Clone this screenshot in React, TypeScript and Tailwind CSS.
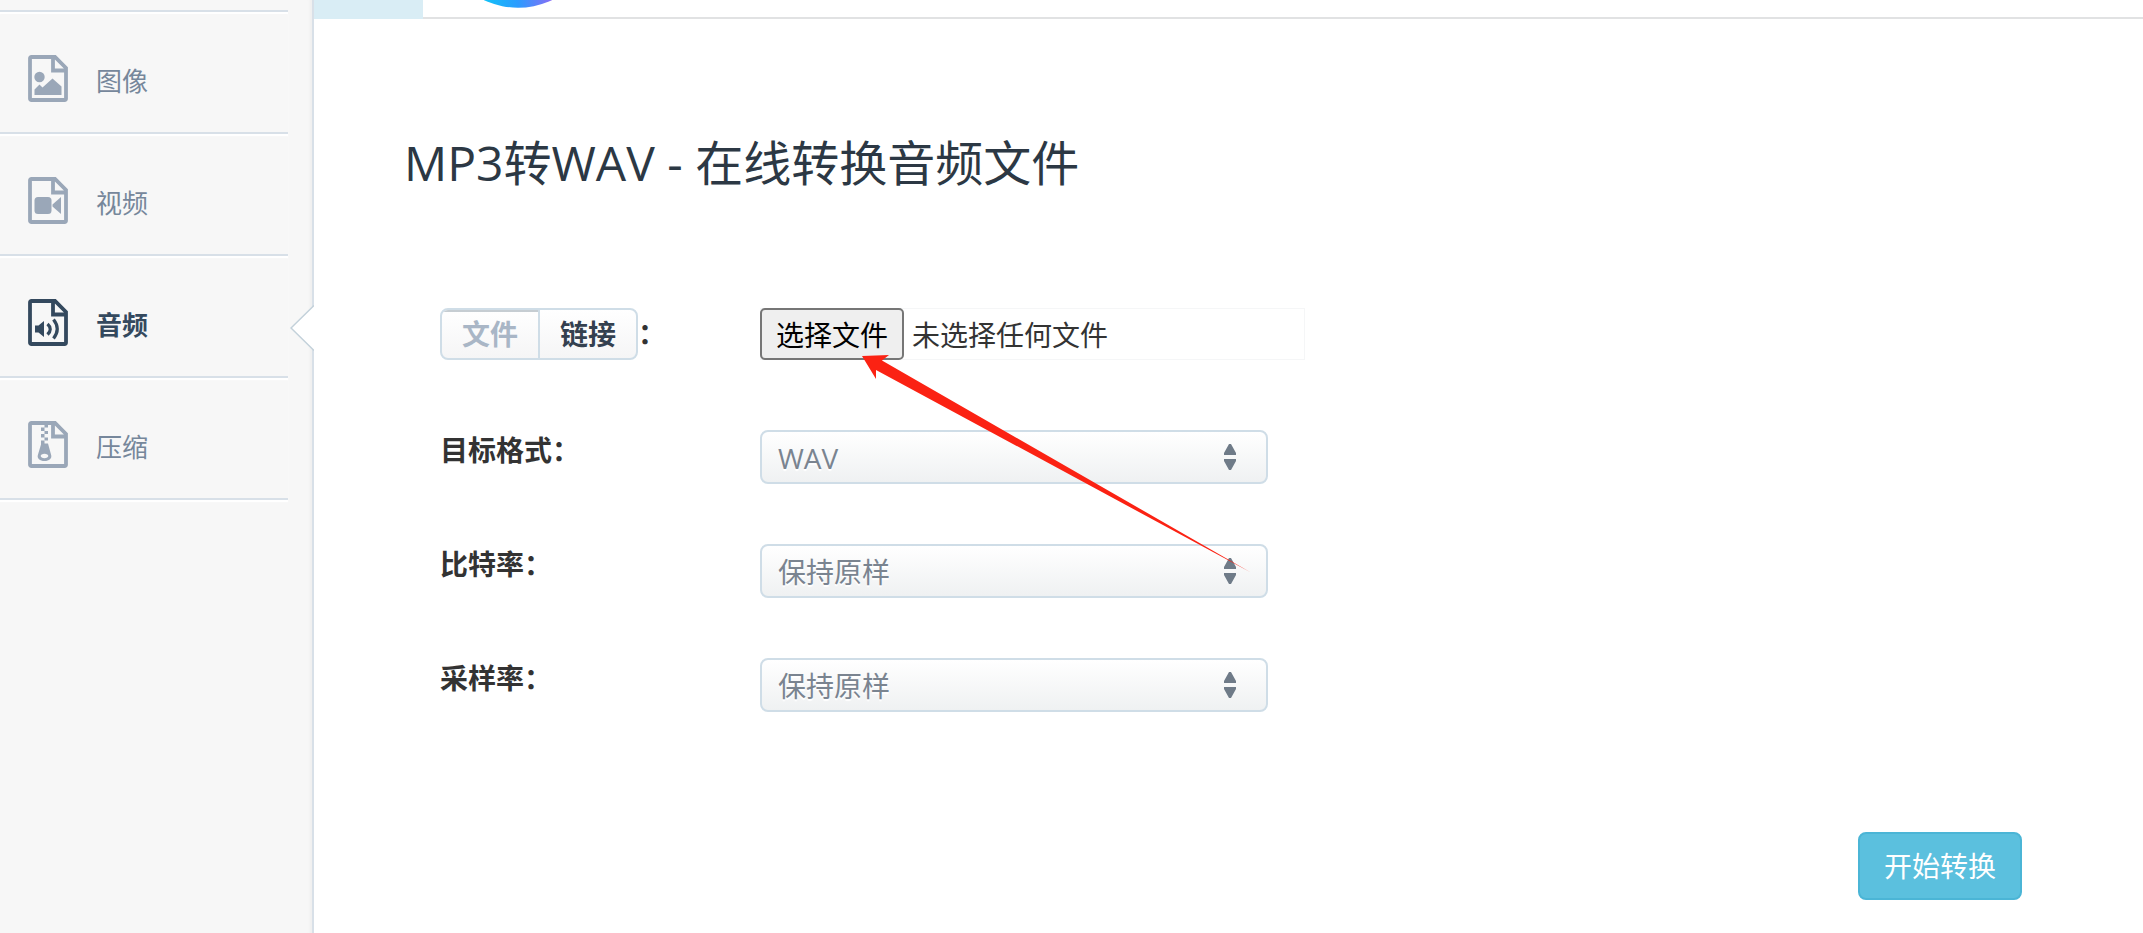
import type React from "react"
import { useId, useRef } from "react"

type NavItem = {
  label: string
  icon: React.ReactNode
  active?: boolean
}

const navItems: NavItem[] = [
  {
    label: "图像",
    icon: (
      <>
        <circle cx="11.5" cy="22" r="5.200" />
        <path d="M6.500 40V34.500l5-5 3 3L24.500 23.500l9 8V40z" />
      </>
    ),
  },
  {
    label: "视频",
    icon: (
      <>
        <rect x="6.500" y="20" width="17" height="17" rx="3.500" />
        <path d="M33 20v17l-8.500-7.500v-2z" />
      </>
    ),
  },
  {
    label: "音频",
    active: true,
    icon: (
      <>
        <path d="M7 26.500h3.500l5.500-4.500v16l-5.500-4.500H7z" />
        <path
          d="M19.500 25q5.500 5 0 10.500M25.500 20.500q7.500 9.500 0 19"
          fill="none"
          stroke="currentColor"
          strokeWidth="3.200"
        />
      </>
    ),
  },
  {
    label: "压缩",
    icon: (
      <>
        <path d="M16.500 3.500h3.500v3h-3.500zM13 6.500h3.500v3.500h-3.500zM16.500 10h3.500v3h-3.500zM13 13h3.500v3.500h-3.500zM16.500 16.500h3.500v3h-3.500z" />
        <path
          fillRule="evenodd"
          d="M13 19.500h3.500v3h3.500l3 11c1.500 4-2 6.500-6.500 6.500s-8-2.500-6.500-6.500l3-10zM16.500 32.800c-2.200 0-3.800 1-3.800 2.200s1.600 2.200 3.800 2.200 3.800-1 3.800-2.200-1.600-2.200-3.800-2.200z"
        />
      </>
    ),
  },
]

const FileIcon: React.FC<{ children: React.ReactNode }> = ({ children }) => (
  <svg viewBox="0 0 40 47" className="w-10 h-[47px] shrink-0" fill="currentColor" aria-hidden="true">
    <path
      d="M3.500 2H27l11 11v30.500q0 1.500-1.500 1.500h-33q-1.500 0-1.500-1.500v-40Q2 2 3.500 2zM25 2v13.500H38"
      fill="none"
      stroke="currentColor"
      strokeWidth="3.800"
    />
    {children}
  </svg>
)

const Sidebar: React.FC = () => (
  <aside className="w-[314px] shrink-0 pt-[10px] bg-[#f7f7f7] border-r-2 border-[#d8e0e8] shadow-[inset_-4px_0_3px_-2px_#efefef]">
    <nav>
      <ul className="mr-6 border-t-2 border-[#d8e0e8]">
        {navItems.map((item) => (
          <li
            key={item.label}
            className="relative border-b-2 border-[#d8e0e8] shadow-[0_2px_1px_#fff,inset_0_2px_1px_#fff]"
          >
            <a
              href="#"
              className={
                item.active
                  ? "flex items-center gap-7 h-[120px] pl-7 pt-3 text-[26px] font-bold text-[#34495e]"
                  : "flex items-center gap-7 h-[120px] pl-7 pt-3 text-[26px] text-[#76879b]"
              }
            >
              <span className={item.active ? "text-[#34495e]" : "text-[#9aa7b8]"}>
                <FileIcon>{item.icon}</FileIcon>
              </span>
              <span className="pt-[5px] leading-10">{item.label}</span>
            </a>
            {/* Notch pointing at the current section */}
            {item.active && (
              <svg viewBox="0 0 24 46" className="absolute top-[49px] -right-[26px] w-6 h-[46px]" aria-hidden="true">
                <path d="M24 0.500L1 23l23 22.500z" fill="#fff" />
                <path d="M24 0.500L1 23l23 22.500" fill="none" stroke="#c3d1da" strokeWidth="1.500" />
              </svg>
            )}
          </li>
        ))}
      </ul>
    </nav>
  </aside>
)

const TopBar: React.FC = () => (
  <header className="flex h-[19px]">
    <div className="w-[109px] bg-[#d9edf5]" />
    <div className="flex-1 pl-[60px] border-b-2 border-[#e1e2e3]">
      <svg viewBox="0 0 70 8" className="w-[70px] h-2" aria-hidden="true">
        <defs>
          <linearGradient id="logo" x1="0" x2="70" y1="0" y2="0" gradientUnits="userSpaceOnUse">
            <stop offset="0" stopColor="#12c3f7" />
            <stop offset="0.5" stopColor="#2a9bff" />
            <stop offset="1" stopColor="#8a6cf5" />
          </linearGradient>
        </defs>
        <circle cx="35" cy="-73" r="80.700" fill="url(#logo)" />
      </svg>
    </div>
  </header>
)

const SelectRow: React.FC<{ label: string; options: string[] }> = ({ label, options }) => {
  const id = useId()

  return (
    <div className="flex">
      <label htmlFor={id} className="w-80 leading-10 font-bold text-[#333]">
        {label}
      </label>
      <div className="relative w-[508px]">
        <select
          id={id}
          className="appearance-none block w-full h-[54px] pl-4 pr-12 pt-[2px] rounded-lg border-2 border-[#cfdde7] bg-gradient-to-b from-white to-[#eff1f2] text-[#7a8490] [text-shadow:0_2px_1px_#fff]"
        >
          {options.map((option) => (
            <option key={option}>{option}</option>
          ))}
        </select>
        <svg
          viewBox="0 0 12 26"
          className="absolute top-[14px] right-8 w-3 h-[26px] pointer-events-none"
          fill="#6f7b88"
          aria-hidden="true"
        >
          <path d="M5 0h2l5 9v2H0V9zM0 15h12v2l-5 9H5l-5-9z" />
        </svg>
      </div>
    </div>
  )
}

const SourceRow: React.FC = () => {
  const fileRef = useRef<HTMLInputElement>(null)

  return (
    <div className="flex items-center">
      <div className="flex w-80 font-bold text-[#333]">
        <div className="flex h-[52px] rounded-lg border-2 border-[#cfdde7] bg-gradient-to-b from-white to-[#f5f5f6] overflow-hidden">
          <button
            type="button"
            className="w-[98px] border-r-2 border-[#cfdde7] text-[#a9b6c6] shadow-[inset_0_2px_0_#c6cdd2]"
          >
            文件
          </button>
          <button type="button" className="w-24 text-[#34404f]">
            链接
          </button>
        </div>
        <span className="leading-[50px]">：</span>
      </div>
      <div className="flex items-center w-[545px] h-[52px] border border-[#f5f6f7]">
        <button
          type="button"
          onClick={() => fileRef.current?.click()}
          className="w-36 h-[52px] -ml-px pt-[2px] rounded-[5px] border-2 border-[#767676] bg-[#efefef] text-black"
        >
          选择文件
        </button>
        <span className="pl-2 pt-[2px] text-[#333]">未选择任何文件</span>
        <input ref={fileRef} type="file" className="hidden" aria-label="选择文件" />
      </div>
    </div>
  )
}

// Hand-drawn pointer from the options up to the file button
const PointerArrow: React.FC = () => (
  <svg
    viewBox="0 0 388 218"
    className="absolute left-[422px] top-[46px] w-[388px] h-[218px] pointer-events-none"
    aria-hidden="true"
  >
    <path d="M0 2L27 1L20 6.500L388 218L14 16L14 25z" fill="#fb2213" />
  </svg>
)

export default function App() {
  return (
    <div className="flex min-h-screen bg-white font-['Open_Sans','Noto_Sans_CJK_SC',sans-serif] text-[28px] leading-10">
      <Sidebar />
      <main className="flex-1 min-w-0">
        <TopBar />
        <div className="pl-[90px] pr-[121px] pt-28">
          <h1 className="text-5xl leading-[64px] text-[#2c3844]">MP3转WAV - 在线转换音频文件</h1>
          <form className="pl-9 pt-[113px]" onSubmit={(e) => e.preventDefault()}>
            <div className="relative">
              <SourceRow />
              <div className="flex flex-col gap-[60px] pt-[70px]">
                <SelectRow label="目标格式：" options={["WAV", "MP3", "FLAC"]} />
                <SelectRow label="比特率：" options={["保持原样", "128 kbps", "320 kbps"]} />
                <SelectRow label="采样率：" options={["保持原样", "44100 Hz", "48000 Hz"]} />
              </div>
              <PointerArrow />
            </div>
            <div className="flex justify-end pt-[120px]">
              <button
                type="submit"
                className="w-[164px] h-[68px] rounded-lg border-2 border-[#4bb5d6] bg-[#5bc0de] text-white"
              >
                开始转换
              </button>
            </div>
          </form>
        </div>
      </main>
    </div>
  )
}
